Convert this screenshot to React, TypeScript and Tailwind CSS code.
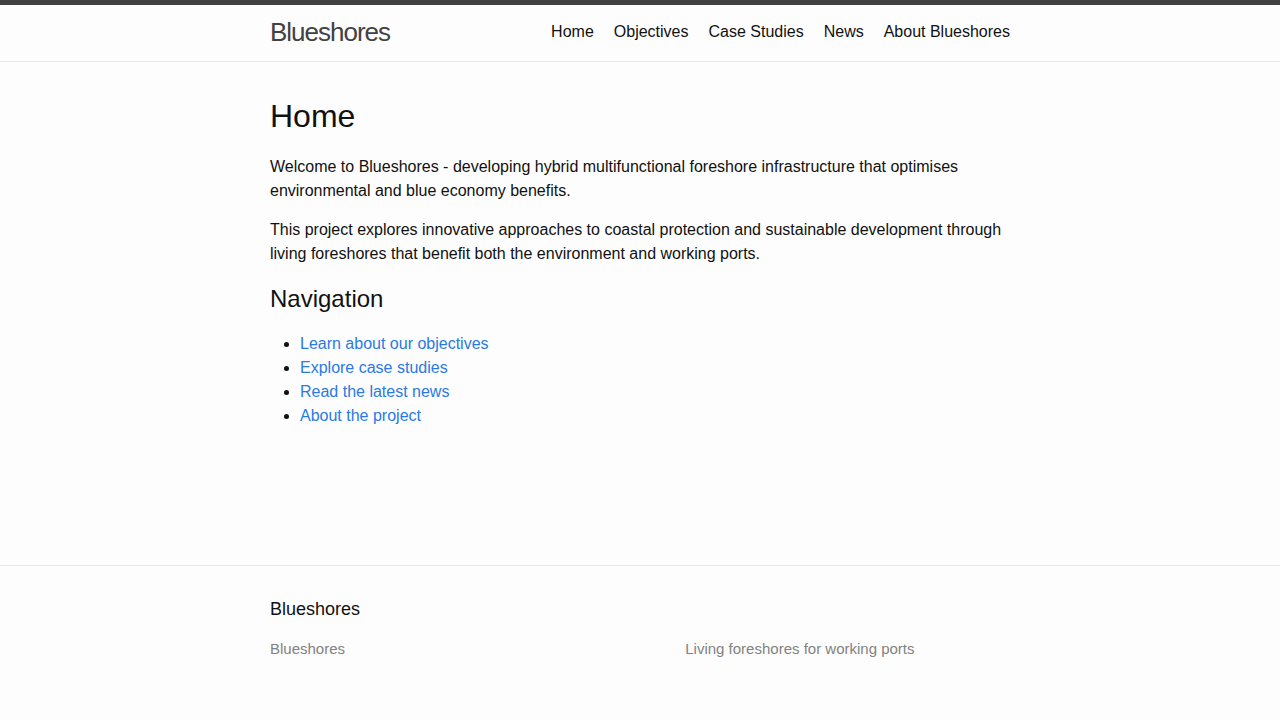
const navLinks = ["Home", "Objectives", "Case Studies", "News", "About Blueshores"];

const pageLinks = [
  "Learn about our objectives",
  "Explore case studies",
  "Read the latest news",
  "About the project",
];

export default function App() {
  return (
    <div className="flex min-h-screen flex-col bg-[#fdfdfd] font-['Liberation_Sans',Arial,sans-serif] text-[16px] leading-[24px] text-[#111]">
      <header className="border-t-[5px] border-b border-t-[#424242] border-b-[#e8e8e8]">
        <div className="mx-auto flex h-[56px] max-w-[740px] items-start justify-between">
          <a className="text-[26px] leading-[54px] font-light tracking-[-1px] text-[#424242]">Blueshores</a>
          <nav className="flex gap-5">
            {navLinks.map((l) => (
              <a key={l} className="leading-[54px] text-[#111]">{l}</a>
            ))}
          </nav>
        </div>
      </header>

      <main className="flex-1 py-[30px]">
        <div className="mx-auto max-w-[740px]">
          <h1 className="mb-[15px] text-[32px] leading-[48px]">Home</h1>
          <p className="mb-[15px]">
            Welcome to Blueshores - developing hybrid multifunctional foreshore infrastructure that optimises
            environmental and blue economy benefits.
          </p>
          <p className="mb-[15px]">
            This project explores innovative approaches to coastal protection and sustainable development through
            living foreshores that benefit both the environment and working ports.
          </p>
          <h2 className="mb-[15px] text-[24px] leading-[36px]">Navigation</h2>
          <ul className="ml-[30px] list-disc">
            {pageLinks.map((l) => (
              <li key={l}>
                <a className="text-[#2a7ae2]">{l}</a>
              </li>
            ))}
          </ul>
        </div>
      </main>

      <footer className="border-t border-[#e8e8e8] pt-[30px] pb-[60px]">
        <div className="mx-auto max-w-[740px]">
          <h2 className="mb-[15px] text-[18px] leading-[27px]">Blueshores</h2>
          <div className="-ml-[15px] flex text-[15px] leading-[22px] text-[#828282]">
            <div className="w-[35%] px-[15px]">Blueshores</div>
            <div className="w-[20%] px-[15px]"></div>
            <div className="w-[45%] px-[15px]">Living foreshores for working ports</div>
          </div>
        </div>
      </footer>
    </div>
  );
}
